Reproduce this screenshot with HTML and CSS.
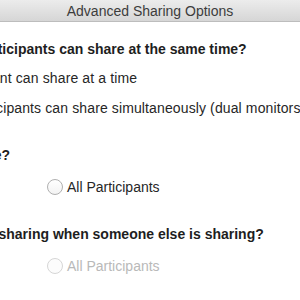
FILE: index.html
```html
<!DOCTYPE html>
<html>
   <head>
      <meta charset = "utf-8">
      <title>Advanced Sharing Options</title>
      <link rel="stylesheet" href="styles.css">
   </head>
   <body>
      <div class = "titlebar">Advanced Sharing Options</div>
      <div class = "content">
         <div class = "heading">How many participants can share at the same time?</div>
         <div class = "group">
            <label class = "option">
               <span class = "radio"></span>One participant can share at a time
            </label>
            <label class = "option">
               <span class = "radio"></span>Multiple participants can share simultaneously (dual monitors recommended)
            </label>
         </div>

         <div class = "heading gap">Who can share?</div>
         <div class = "choices">
            <label class = "option host"><span class = "radio"></span>Host Only</label>
            <label class = "option"><span class = "radio"></span>All Participants</label>
         </div>

         <div class = "heading gap">Who can start sharing when someone else is sharing?</div>
         <div class = "choices">
            <label class = "option host off"><span class = "radio"></span>Host Only</label>
            <label class = "option off"><span class = "radio"></span>All Participants</label>
         </div>
      </div>
   </body>
</html>
```

FILE: styles.css
```css
body     { margin: 0px; background: white; overflow: hidden;
           font-family: "Liberation Sans", Arial, sans-serif; font-size: 14px; color: #262626; }
.titlebar { height: 21px; line-height: 22px; text-align: center;
           font-size: 14px; color: #3c3c3c;
           background: linear-gradient(#ececec, #d6d6d6);
           border-bottom: 1px solid #bdbdbd; }
.content { margin-left: -98px; padding-top: 17px; white-space: nowrap; }
.heading { font-weight: bold; line-height: 20px; color: #1e1e1e; margin-bottom: 9px; }
.heading.gap { margin-top: 27px; margin-bottom: 12px; }
.group   { margin-left: -7px; letter-spacing: 0.12px; }
.option  { display: flex; align-items: center; line-height: 20px; margin-bottom: 10px; }
.choices { display: flex; }
.choices .option { margin-bottom: 0px; }
.host    { width: 145px; }
.radio   { width: 14px; height: 14px; border: 1px solid #b0b0b0; border-radius: 50%;
           background: linear-gradient(#ffffff, #f3f3f3); margin-right: 4px; flex: none; }
.off     { color: #b9b9b9; }
.off .radio { border-color: #d6d6d6; background: #fcfcfc; }
```
